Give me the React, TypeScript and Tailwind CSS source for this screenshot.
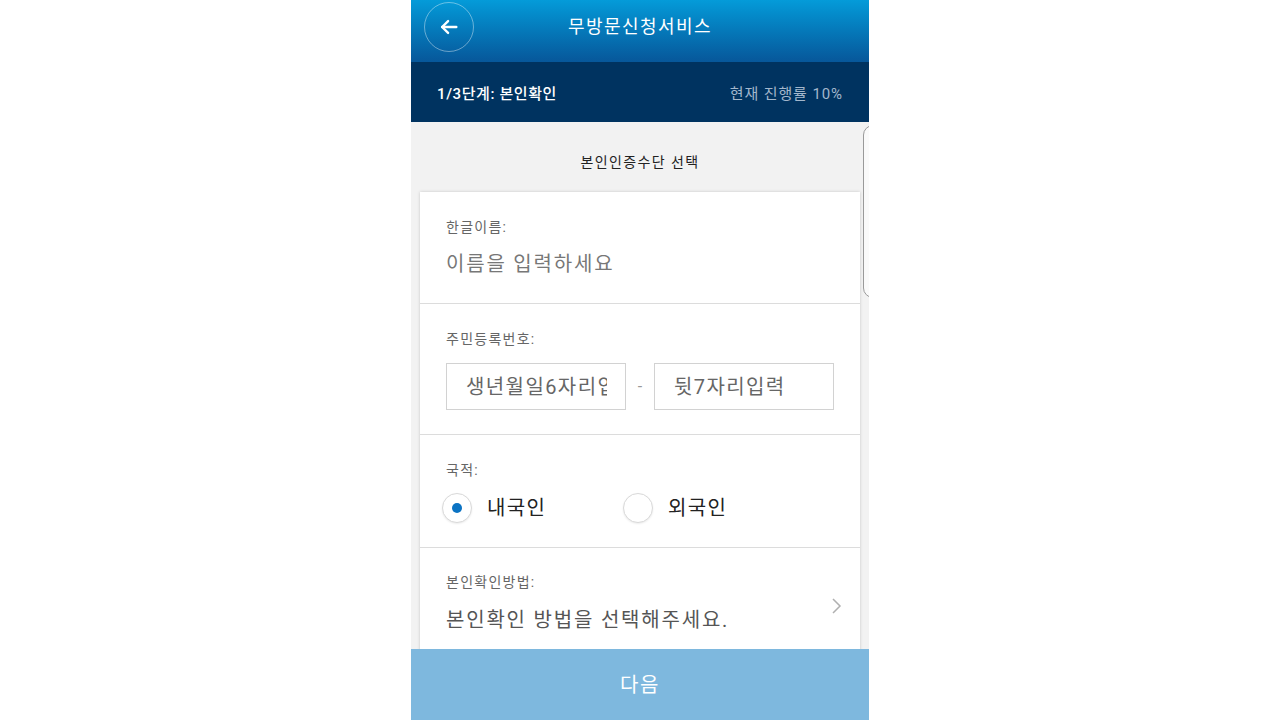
import * as React from 'react';

const FONT = { fontFamily: 'Roboto, "Noto Sans CJK KR", "Noto Sans", sans-serif' };

const Radio = ({ checked, label }: { checked?: boolean; label: string }) => (
  <div className="flex items-center w-[181px]">
    <div className="w-[30px] h-[30px] rounded-full border border-[#d9d9d9] bg-white shadow-[0_1px_2px_rgba(0,0,0,0.08)] flex items-center justify-center">
      {checked && <div className="w-[10px] h-[10px] rounded-full bg-[#0b73c3]" />}
    </div>
    <span className="ml-[15px] text-[20px] leading-[28px] text-[#222] tracking-[0.07em]">{label}</span>
  </div>
);

const Field = ({ label, children, className = '' }: { label: string; children: React.ReactNode; className?: string }) => (
  <div className={`px-[26px] ${className}`}>
    <div className="text-[14px] leading-[20px] text-[#666] tracking-[0.09em]">{label}</div>
    {children}
  </div>
);

export default function App() {
  return (
    <div className="w-[1280px] h-[720px] bg-white flex justify-center" style={FONT}>
      <div className="w-[458px] h-[720px] flex flex-col overflow-hidden relative bg-[#f2f2f2]">
        {/* header */}
        <div className="h-[62px] shrink-0 bg-gradient-to-b from-[#049bd9] to-[#07579a] flex items-center px-[13px] pb-[8px]">
          <button className="w-[50px] h-[50px] rounded-full border border-white/40 flex items-center justify-center">
            <svg width="22" height="22" viewBox="0 0 24 24" fill="none" stroke="white" strokeWidth="2.6" strokeLinecap="round" strokeLinejoin="round">
              <path d="M20 12H4.5" />
              <path d="M11 5.5 4.5 12l6.5 6.5" />
            </svg>
          </button>
          <div className="flex-1 text-center text-white text-[18px] leading-[26px] pr-[50px] tracking-[0.08em]">무방문신청서비스</div>
        </div>

        {/* step bar */}
        <div className="h-[60px] shrink-0 bg-[#003360] flex items-center justify-between px-[26px] pt-[4px]">
          <span className="text-white text-[15px] font-medium tracking-[0.04em]">1/3단계: 본인확인</span>
          <span className="text-[#a3b7cc] text-[15px] tracking-[0.06em]">현재 진행률 10%</span>
        </div>

        {/* body */}
        <div className="flex-1 overflow-hidden">
          <div className="h-[70px] pt-[10px] flex items-center justify-center text-[14px] text-[#222] tracking-[0.1em]">본인인증수단 선택</div>
          <div className="mx-[9px] w-[440px] bg-white shadow-[0_0_3px_rgba(0,0,0,0.18)]">
            <Field label="한글이름:" className="pt-[25px] pb-[25px]">
              <div className="mt-[13px] text-[20px] leading-[28px] text-[#777] tracking-[0.09em]">이름을 입력하세요</div>
            </Field>

            <Field label="주민등록번호:" className="border-t border-[#dcdcdc] pt-[25px] pb-[24px]">
              <div className="mt-[14px] flex items-center">
                <div className="w-[180px] h-[47px] border border-[#d2d2d2] pl-[19px] pr-[18px] flex items-center">
                  <div className="overflow-hidden whitespace-nowrap text-[20px] leading-[28px] text-[#666] tracking-[0.07em]">생년월일6자리입력</div>
                </div>
                <div className="w-[28px] text-center text-[16px] text-[#999]">-</div>
                <div className="w-[180px] h-[47px] border border-[#d2d2d2] pl-[19px] pr-[18px] flex items-center">
                  <div className="overflow-hidden whitespace-nowrap text-[20px] leading-[28px] text-[#666] tracking-[0.07em]">뒷7자리입력</div>
                </div>
              </div>
            </Field>

            <div className="border-t border-[#dcdcdc] pt-[25px] pb-[24px] pl-[22px]">
              <div className="pl-[4px] text-[14px] leading-[20px] text-[#666] tracking-[0.09em]">국적:</div>
              <div className="mt-[13px] flex">
                <Radio checked label="내국인" />
                <Radio label="외국인" />
              </div>
            </div>

            <Field label="본인확인방법:" className="border-t border-[#dcdcdc] pt-[24px] pb-[25px] relative">
              <div className="mt-[14px] text-[20px] leading-[28px] text-[#555] tracking-[0.09em]">본인확인 방법을 선택해주세요.</div>
              <svg className="absolute right-[17px] top-[49px]" width="12" height="18" viewBox="0 0 12 18" fill="none" stroke="#b0b0b0" strokeWidth="1.5">
                <path d="M2 2l7 7-7 7" />
              </svg>
            </Field>
          </div>
        </div>

        {/* next button */}
        <div className="h-[71px] shrink-0 bg-[#7eb8de] flex items-center justify-center text-white text-[20px] tracking-[0.08em]">다음</div>

        {/* edge of neighbouring panel */}
        <div className="absolute left-[452px] top-[125px] w-[24px] h-[173px] rounded-l-[10px] border border-[#9a9a9a] bg-[#fafafa]" />
      </div>
    </div>
  );
}
